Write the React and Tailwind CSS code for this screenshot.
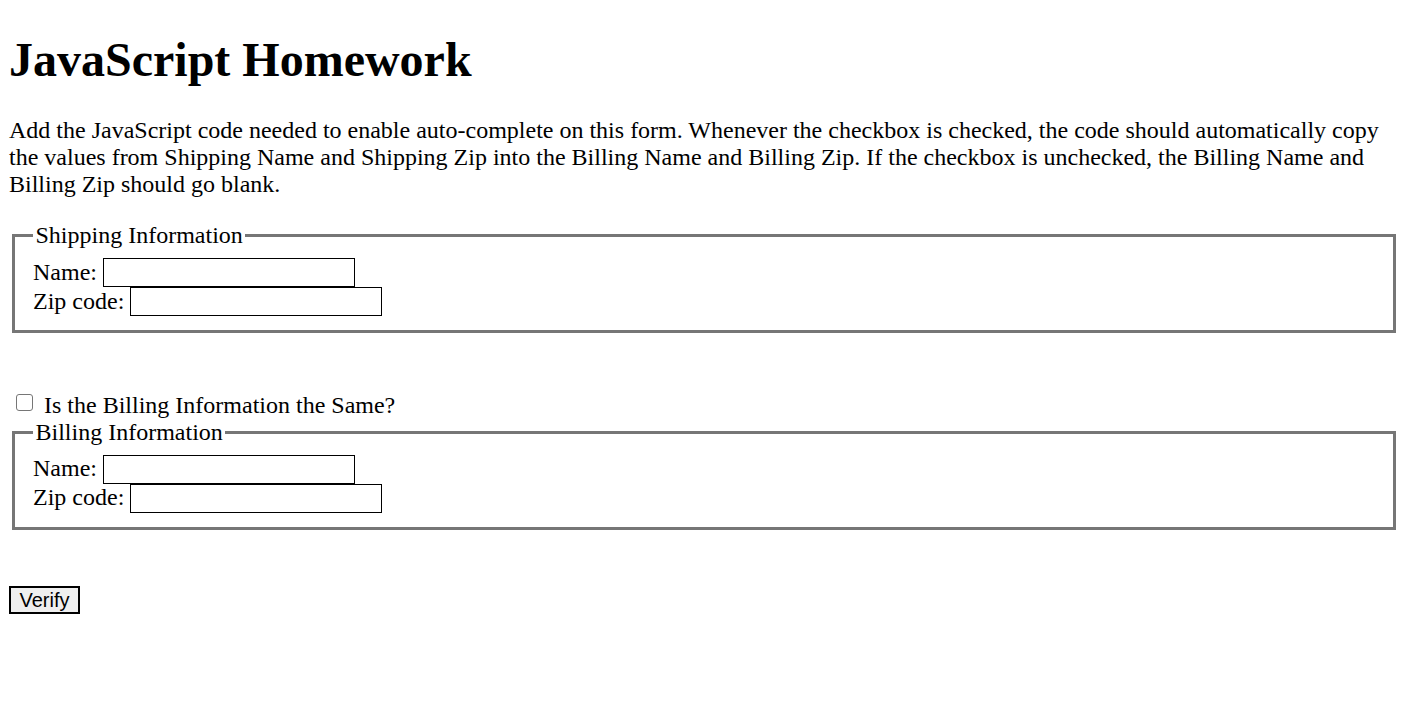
import React from "react";

function Row({ label }) {
  return (
    <div className="flex h-[29px] items-center">
      <span className="whitespace-pre">{label} </span>
      <span className="box-border inline-block h-[29px] w-[252px] border border-black bg-white"></span>
    </div>
  );
}

function Fieldset({ legend, className }) {
  return (
    <fieldset
      className={
        "ml-[3px] mr-[1px] border-[3px] border-[#767676] px-[18px] pt-[8.5px] pb-[14px] " +
        (className || "")
      }
    >
      <legend className="px-[2.5px] leading-[27.6px]">{legend}</legend>
      <Row label="Name:" />
      <Row label="Zip code:" />
    </fieldset>
  );
}

export default function App() {
  return (
    <div className="min-h-screen bg-white pl-[9px] pr-[8px] text-[24px] leading-[27.6px] text-black font-['Liberation_Serif','Times_New_Roman',serif]">
      <h1 className="pt-[32px] text-[48px] font-bold leading-[55px]">JavaScript Homework</h1>
      <p className="mt-[30px] leading-[27px]">
        Add the JavaScript code needed to enable auto-complete on this form. Whenever the checkbox is checked, the
        code should automatically copy the values from Shipping Name and Shipping Zip into the Billing Name and
        Billing Zip. If the checkbox is unchecked, the Billing Name and Billing Zip should go blank.
      </p>
      <Fieldset legend="Shipping Information" className="mt-[24px]" />
      <div className="mt-[58.5px] flex h-[27px] items-start">
        <span className="ml-[7px] mt-[2.5px] box-border inline-block h-[17px] w-[17px] rounded-[3px] border border-[#767676] bg-white"></span>
        <span className="ml-[11px]">Is the Billing Information the Same?</span>
      </div>
      <Fieldset legend="Billing Information" />
      <div className="mt-[56px]">
        <button className="box-border h-[28px] w-[71px] border-2 border-black bg-[#efefef] text-[20px] leading-[24px] text-black font-['Liberation_Sans',Arial,sans-serif]">
          Verify
        </button>
      </div>
    </div>
  );
}
